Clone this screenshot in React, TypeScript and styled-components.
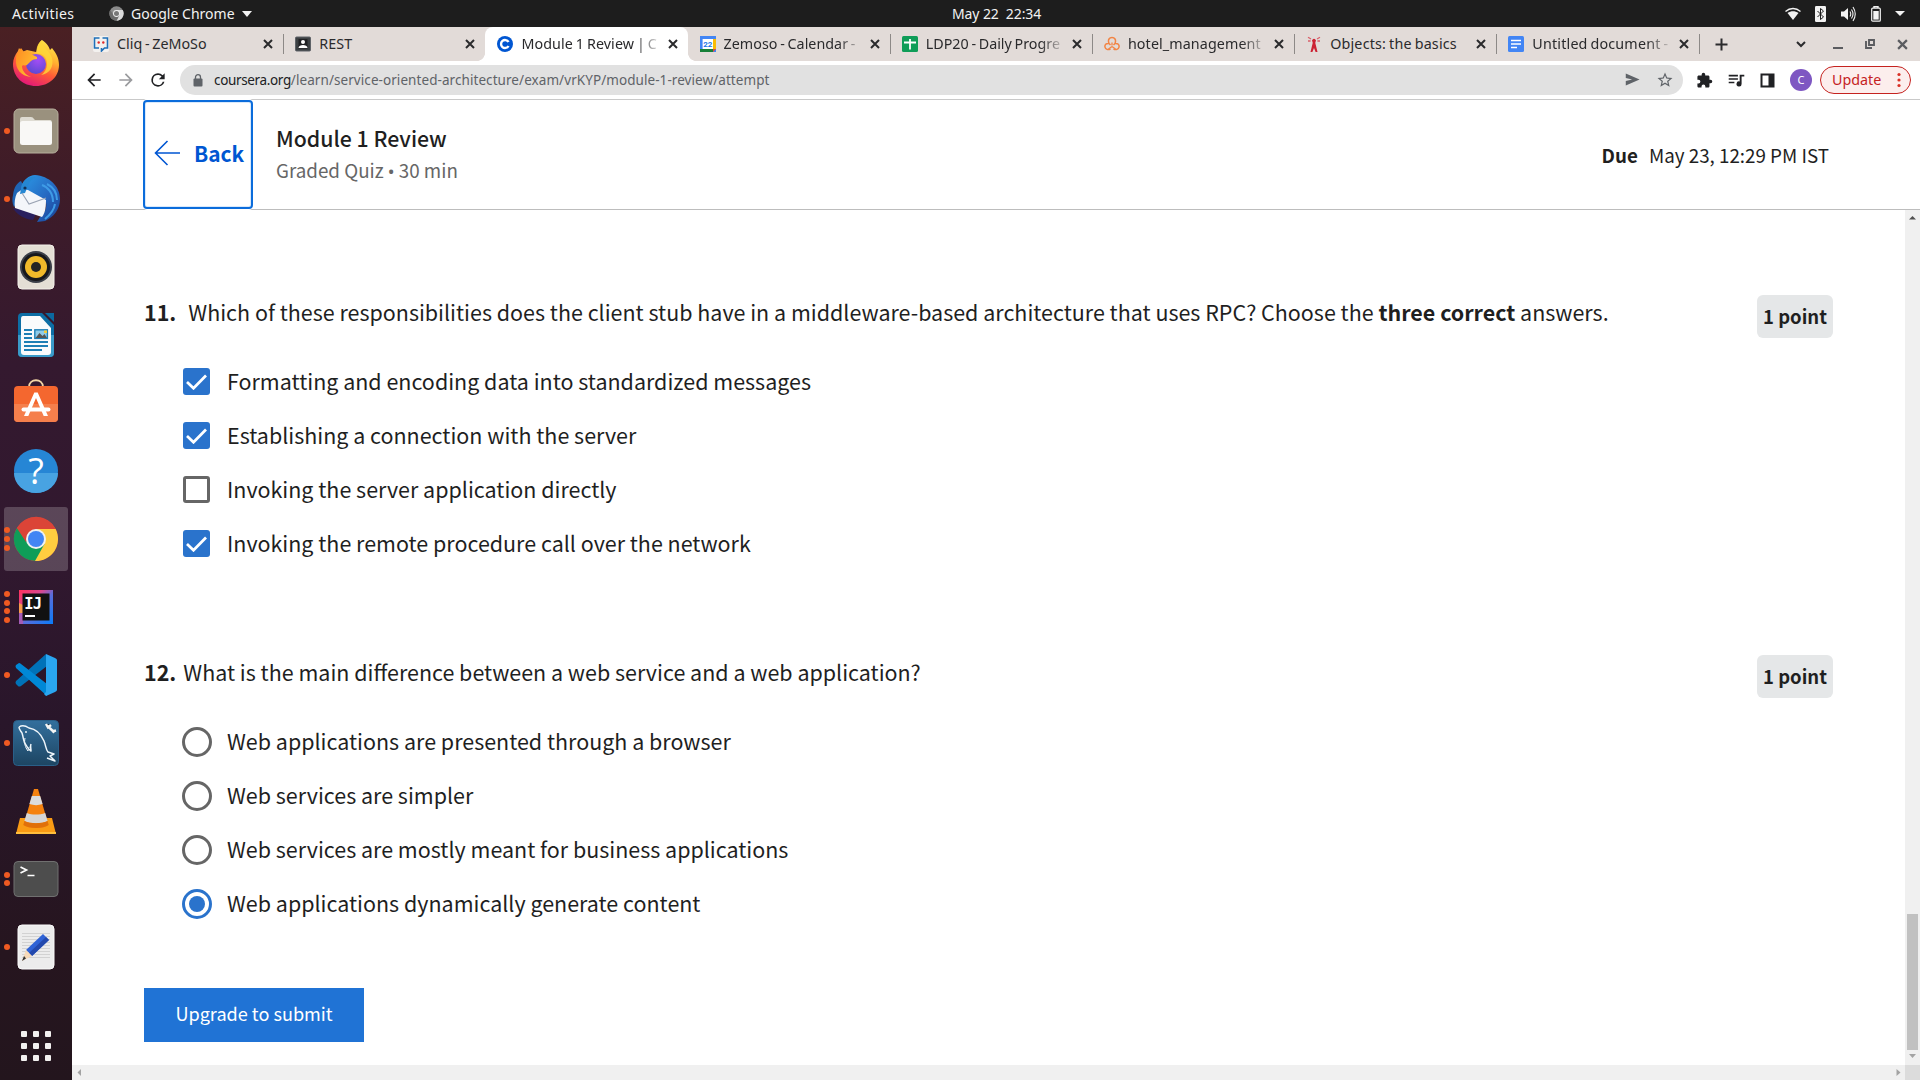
import React from "react";
import styled, { createGlobalStyle, css } from "styled-components";

const UI = `"Noto Sans", "Open Sans", sans-serif`;
const PAGE = `"Noto Sans CJK SC", "Noto Sans", sans-serif`;

const GlobalStyle = createGlobalStyle`
  *, *::before, *::after { box-sizing: border-box; }
  html, body { margin: 0; padding: 0; background: #fff; overflow: hidden; }
  svg { display: block; flex: none; }
  button { font: inherit; margin: 0; }
`;

const Desktop = styled.div`
  width: 1920px;
  height: 1080px;
  display: flex;
  flex-direction: column;
  overflow: hidden;
  font-family: ${UI};
`;

/* ---------- system bar ---------- */

const TopBar = styled.header`
  height: 27px;
  flex: none;
  display: flex;
  align-items: center;
  background: #1d1d1d;
  color: #f2f2f2;
  font-size: 14px;
  line-height: 27px;
  padding: 0 12px;
  white-space: pre;
`;
const Activities = styled.span`
  width: 97px;
  letter-spacing: 0.4px;
`;
const AppMenu = styled.div`
  width: 843px;
  display: flex;
  align-items: center;
  gap: 7px;
  letter-spacing: 0.02px;
`;
const Clock = styled.span`
  letter-spacing: -0.1px;
`;
const Tray = styled.div`
  margin-left: auto;
  display: flex;
  align-items: center;
  gap: 14px;
  margin-right: 3px;
`;

const Workspace = styled.div`
  flex: 1;
  display: flex;
  min-height: 0;
`;

/* ---------- dock ---------- */

const Dock = styled.nav`
  width: 72px;
  flex: none;
  display: flex;
  flex-direction: column;
  padding: 2px 0 10px;
  background: linear-gradient(#4a2023 0%, #3f1c28 14%, #34192f 32%, #31182f 50%, #29162a 66%, #26151f 88%, #23151d 100%);
`;
const DockItem = styled.div<{ $active?: boolean }>`
  height: 64px;
  margin: 2px 4px;
  display: grid;
  grid-template-columns: 6px 48px;
  column-gap: 2px;
  align-items: center;
  border-radius: 3px;
  background: ${(p) => (p.$active ? "rgba(255,255,255,0.2)" : "transparent")};
`;
const Dots = styled.div`
  display: flex;
  flex-direction: column;
  gap: 2.7px;
`;
const Dot = styled.i`
  width: 6px;
  height: 6px;
  border-radius: 50%;
  background: #f05a22;
`;
const AppGrid = styled.div`
  margin: auto auto 0;
  height: 48px;
  display: grid;
  grid-template-columns: repeat(3, 6px);
  gap: 6px;
  align-content: center;
`;
const GridCell = styled.i`
  height: 6px;
  border-radius: 1px;
  background: #f2f0ef;
`;

/* ---------- browser chrome ---------- */

const Browser = styled.main`
  flex: 1;
  min-width: 0;
  display: flex;
  flex-direction: column;
`;
const TabStrip = styled.div`
  height: 34px;
  flex: none;
  display: flex;
  padding-left: 9px;
  background: #e2dbd8;
`;
const Tab = styled.div<{ $active?: boolean; $divider?: boolean }>`
  width: 202.2px;
  height: 34px;
  position: relative;
  display: flex;
  align-items: center;
  padding: 0 10px 0 12px;
  font-size: 14.3px;
  line-height: 34px;
  color: #2a2a2c;
  ${(p) =>
    p.$divider &&
    css`
      &::after {
        content: "";
        position: absolute;
        right: -1px;
        top: 7px;
        width: 1px;
        height: 20px;
        background: #8d8987;
      }
    `}
  ${(p) =>
    p.$active &&
    css`
      background: #fff;
      border-radius: 8px 8px 0 0;
      &::before,
      &::after {
        content: "";
        position: absolute;
        bottom: 0;
        width: 8px;
        height: 8px;
      }
      &::before {
        left: -8px;
        background: radial-gradient(circle at 0 0, transparent 7.6px, #fff 8.2px);
      }
      &::after {
        right: -8px;
        background: radial-gradient(circle at 100% 0, transparent 7.6px, #fff 8.2px);
      }
    `}
`;
const TabTitle = styled.span<{ $track: number; $fade: boolean }>`
  flex: 1;
  margin: 0 7px 0 8px;
  white-space: nowrap;
  word-spacing: -1px;
  letter-spacing: ${(p) => p.$track}px;
  ${(p) => p.$fade && "mask-image: linear-gradient(90deg, #000 82%, transparent 101%);"}
`;
const StripControls = styled.div`
  flex: 1;
  display: flex;
  align-items: center;
  color: #2b2b2d;
`;
const NewTab = styled.span`
  margin: 0 auto 0 16px;
`;
const WindowButtons = styled.div`
  display: flex;
  align-items: center;
  gap: 22px;
  margin-right: 12px;
  color: #5b5c60;
`;
const TabSearch = styled.span`
  margin-right: 5px;
`;

const Toolbar = styled.div`
  height: 39px;
  flex: none;
  display: flex;
  align-items: center;
  padding: 0 9px 0 12px;
  border-bottom: 1px solid #c9c9c9;
  color: #202124;
`;
const NavButtons = styled.div`
  display: flex;
  gap: 12px;
  width: 96px;
`;
const Omnibox = styled.div`
  width: 1503px;
  height: 30px;
  display: flex;
  align-items: center;
  padding: 0 9px 0 13px;
  border-radius: 15px;
  background: #e1e1e1;
  color: #5f6368;
  font-size: 13.5px;
  line-height: 30px;
`;
const Url = styled.span`
  margin-left: 11px;
  margin-right: auto;
  letter-spacing: 0.07px;
`;
const Host = styled.span`
  color: #202124;
  letter-spacing: -0.35px;
`;
const OmniActions = styled.div`
  display: flex;
  gap: 15px;
`;
const Extensions = styled.div`
  margin-left: auto;
  display: flex;
  align-items: center;
  gap: 15px;
`;
const Avatar = styled.span`
  width: 22px;
  height: 22px;
  border-radius: 50%;
  background: #7e57c2;
  color: #fff;
  font: 11px/22px ${UI};
  text-align: center;
`;
const UpdateButton = styled.span`
  width: 91px;
  height: 28px;
  margin-left: 8px;
  display: flex;
  align-items: center;
  justify-content: space-between;
  padding: 0 9px 0 11px;
  border: 1px solid #c5221f;
  border-radius: 14px;
  background: #fceeed;
  color: #c5221f;
  font-size: 14.3px;
  line-height: 26px;
`;

/* ---------- quiz page ---------- */

const QuizHeader = styled.div`
  height: 110px;
  flex: none;
  display: flex;
  padding: 0 91px 0 71px;
  border-bottom: 1px solid #bdbdbd;
  font-family: ${PAGE};
  color: #1f1f1f;
`;
const BackButton = styled.a`
  position: relative;
  width: 110px;
  height: 109px;
  display: flex;
  align-items: center;
  gap: 14px;
  padding: 0 0 3px 9px;
  border: 2px solid #0b6cdb;
  border-radius: 4px;
  box-shadow: 0 0 0 1px #fff, inset 0 0 0 1px #d9e9fb;
  color: #0056d2;
  font-weight: 700;
  font-size: 20.9px;
  line-height: 30px;
`;
const HeaderText = styled.div`
  margin-left: 23px;
  padding-top: 22px;
`;
const Title = styled.h1`
  margin: 0;
  font-size: 21.3px;
  font-weight: 500;
  line-height: 32px;
`;
const Subtitle = styled.div`
  margin-top: 0;
  font-size: 18.8px;
  line-height: 32px;
  color: #666;
`;
const Bullet = styled.span`
  font-family: "Noto Sans", sans-serif;
  font-size: 18px;
`;
const Due = styled.div`
  margin: 40px 0 0 auto;
  display: flex;
  gap: 11px;
  font-size: 18.8px;
  line-height: 30px;
`;
const Strong = styled.b`
  font-weight: 700;
`;

const Viewport = styled.div`
  flex: 1;
  min-height: 0;
  display: grid;
  grid-template-columns: 1fr 15px;
  grid-template-rows: 1fr 15px;
`;
const QuizBody = styled.section`
  padding: 85px 72px 0;
  font-family: ${PAGE};
  color: #1f1f1f;
  font-size: 21.48px;
`;
const Question = styled.article`
  margin-bottom: 84px;
  &:last-of-type {
    margin-bottom: 57px;
  }
`;
const QuestionHead = styled.div`
  height: 60px;
  display: flex;
  align-items: flex-start;
  line-height: 34px;
`;
const Num = styled.b<{ $gap: number }>`
  margin-right: ${(p) => p.$gap}px;
`;
const Points = styled.span`
  margin-left: auto;
  width: 76px;
  height: 43px;
  border-radius: 6px;
  background: #e5e7e8;
  font-weight: 700;
  font-size: 18.5px;
  line-height: 43px;
  text-align: center;
`;
const Option = styled.label`
  height: 54px;
  display: flex;
  align-items: center;
  padding-left: 37px;
`;
const OptionText = styled.span`
  line-height: 51px;
  padding-bottom: 3px;
`;
const Control = styled.span`
  width: 31px;
  height: 30px;
  margin-right: 15px;
  display: grid;
  place-items: center;
`;
const Box = styled.span<{ $on: boolean }>`
  width: 27px;
  height: 27px;
  display: grid;
  place-items: center;
  border-radius: 3px;
  border: ${(p) => (p.$on ? "0" : "3px solid #666")};
  background: ${(p) => (p.$on ? "#2a73cc" : "#fff")};
  margin-top: -1px;
`;
const Radio = styled.span<{ $on: boolean }>`
  width: 30px;
  height: 30px;
  display: grid;
  place-items: center;
  border-radius: 50%;
  border: 3px solid ${(p) => (p.$on ? "#2a73cc" : "#666")};
  &::after {
    content: "";
    width: 16px;
    height: 16px;
    border-radius: 50%;
    background: ${(p) => (p.$on ? "#2a73cc" : "transparent")};
  }
`;
const Submit = styled.button`
  width: 220px;
  height: 54px;
  padding: 0 0 3px;
  border: 0;
  background: #2073d5;
  color: #fff;
  font-size: 18.1px;
  line-height: 51px;
  font-family: ${PAGE};
`;

const VBar = styled.div`
  display: flex;
  flex-direction: column;
  align-items: center;
  padding: 4px 0 6px;
  background: #f0f0f0;
`;
const Thumb = styled.div`
  width: 11px;
  height: 136px;
  margin: auto 0 2px;
  background: #c1c1c1;
`;
const HBar = styled.div`
  display: flex;
  align-items: center;
  justify-content: space-between;
  padding: 0 3px 0 4px;
  background: #f0f0f0;
`;
const Corner = styled.div`
  background: #dcdcdc;
`;

/* ---------- dock icons ---------- */

const I = ({ children }: { children: React.ReactNode }) => (
  <svg width="48" height="48" viewBox="0 0 48 48">{children}</svg>
);

const Firefox = () => (
  <I>
    <defs>
      <linearGradient id="ff1" x1=".75" y1="0" x2=".3" y2="1">
        <stop offset="0" stopColor="#ffe94a" /><stop offset=".35" stopColor="#ffb030" />
        <stop offset=".62" stopColor="#ff5b36" /><stop offset="1" stopColor="#e2147c" />
      </linearGradient>
      <radialGradient id="ff2" cx=".6" cy=".3" r=".8"><stop offset="0" stopColor="#a44df5" /><stop offset="1" stopColor="#5548cf" /></radialGradient>
      <linearGradient id="ff3" x1="0" y1="0" x2="1" y2=".6"><stop offset="0" stopColor="#ff8a22" /><stop offset="1" stopColor="#ffc130" /></linearGradient>
    </defs>
    <path d="M30 1c5 3 7 7 8 10l2-2c4 5 7 10 7 17 0 12-10 21-23 21S1 38 1 25c0-5 2-9 5-13l1-3 3 4 5-2 9 2 1-3c1-4 2-7 5-9Z" fill="url(#ff1)" />
    <circle cx="24" cy="25" r="10" fill="url(#ff2)" />
    <path d="M9 9l3 4c3-1 5 0 7 2l6 3 0 2c-5 0-7 3-9 5-3 3-5 0-6 2 0 4 3 9 9 11C9 37 3 30 4 20c0-5 3-8 5-11Z" fill="url(#ff3)" />
    <path d="M22 15c8-2 13 3 13 10 0 5-3 9-6 11 9-1 13-9 11-17-3-9-10-10-10-18-5 4-6 9-5 12l-3 2Z" fill="#ffd83a" opacity=".8" />
  </I>
);
const Files = () => (
  <I>
    <rect x="2" y="2" width="44" height="44" rx="5" fill="#9a917e" stroke="#b7af9d" />
    <path d="M8 12q0-2 2-2h9q2 0 3 2l1 1h15q2 0 2 3v18H8z" fill="#dedbd2" />
    <rect x="8" y="14" width="32" height="24" rx="2.5" fill="#f9f8f6" />
  </I>
);
const Thunderbird = () => (
  <I>
    <defs><linearGradient id="tb" x1="0" y1="0" x2="1" y2="1"><stop offset="0" stopColor="#2b9be8" /><stop offset=".6" stopColor="#2563bd" /><stop offset="1" stopColor="#17408f" /></linearGradient></defs>
    <path d="M1 33c4 7 11 11 20 12l4-8z" fill="#29205f" />
    <path d="M9 13C11 5 17 0 23 0c14 1 25 11 25 24 0 10-6 18-15 22l-8 1 3-5c5-4 7-9 6-15L9 13Z" fill="url(#tb)" />
    <path d="M1 20C2 12 5 8 9 6l6 12-13 14C0 28 0 24 1 20Z" fill="#1f65b5" />
    <path d="M5 18c3-3 6-4 11-3l18 10c0 8-1 13-4 17L3 33C2 28 3 22 5 18Z" fill="#f4f6fa" />
    <path d="M9 14c0-8 8-13 15-12-4 2-7 5-8 9l-3 7-5 1Z" fill="#2587d3" />
    <path d="M10 18l7 11 17-6" fill="none" stroke="#9aa3b3" strokeWidth="1.1" />
    <path d="M30 10c6 2 11 8 11 17m-6-18c6 3 10 9 10 16M33 44c5-4 9-9 10-15" stroke="#3e9be6" strokeWidth="2" fill="none" />
    <circle cx="13" cy="13" r="1.6" fill="#132f55" />
  </I>
);
const Rhythmbox = () => (
  <I>
    <rect x="6" y="2" width="36" height="44" rx="4" fill="#e4dfd5" stroke="#f4f1eb" />
    <circle cx="24" cy="24" r="16" fill="#3b3f48" /><circle cx="24" cy="24" r="14" fill="#17181c" />
    <circle cx="24" cy="24" r="11" fill="#f0b92a" /><circle cx="24" cy="24" r="5" fill="#242424" />
  </I>
);
const Writer = () => (
  <I>
    <path d="M10 2h20l12 12v28q0 4-4 4H10q-4 0-4-4V6q0-4 4-4z" fill="#0d6ea5" />
    <path d="M6 24h36v18q0 4-4 4H10q-4 0-4-4z" fill="#3a9bc9" />
    <path d="M33 2h9v9z" fill="#0c69a0" />
    <path d="M11 5h17l11 12v24q0 3-3 3H12q-3 0-3-3V8q0-3 2-3z" fill="#fafbfc" />
    <path d="M12 19h8M12 23h8M12 27h8M12 31h24M12 35h24M12 39h18" stroke="#1e7fb5" strokeWidth="2" />
    <rect x="22.8" y="18.8" width="12.6" height="8.6" fill="#8fcbe8" stroke="#1e7fb5" strokeWidth="1.4" />
    <path d="M23.5 27l4-5 3 3 2-2 2.5 4z" fill="#555" /><rect x="32" y="19.5" width="3" height="2.5" fill="#f3cb3b" />
  </I>
);
const Software = () => (
  <I>
    <path d="M17 8c0-9 14-9 14 0" fill="none" stroke="#f3d6a6" strokeWidth="1.8" />
    <rect x="2" y="7" width="44" height="36" rx="4" fill="#f4672f" />
    <path d="M2 25h44v14q0 4-4 4H6q-4 0-4-4z" fill="#f57f4c" />
    <path d="M22.300 13.500h3.400L36 37h-4.300L24 19l-7.700 18H12z" fill="#fff" />
    <path d="M11.500 30.500h25" stroke="#fff" strokeWidth="4" strokeLinecap="round" />
  </I>
);
const Help = () => (
  <I>
    <circle cx="24" cy="24" r="22" fill="#2686d5" />
    <path d="M2 26h44a22 20 0 0 1-44 0z" fill="#48a3e2" />
    <text x="24" y="37" textAnchor="middle" fontFamily="Open Sans" fontSize="36" fill="#fff">?</text>
  </I>
);
const Chrome = () => (
  <I>
    <circle cx="24" cy="24" r="22" fill="#db4437" />
    <path d="M24 24L4.9 13A22 22 0 0 0 24 46l9.500-16.500z" fill="#0f9d58" />
    <path d="M24 14h19.600A22 22 0 0 1 23 46l9.500-17z" fill="#ffcd40" />
    <path d="M4.900 13A22 22 0 0 1 43.700 14H24L14 27z" fill="#db4437" />
    <circle cx="24" cy="24" r="10" fill="#f1f1f1" /><circle cx="24" cy="24" r="8" fill="#4285f4" />
  </I>
);
const IntelliJ = () => (
  <I>
    <defs><linearGradient id="ij" x1="0" y1="0" x2="1" y2="1"><stop offset="0" stopColor="#fe315d" /><stop offset=".35" stopColor="#d8488f" /><stop offset=".55" stopColor="#5a6ddb" /><stop offset="1" stopColor="#087cfa" /></linearGradient></defs>
    <rect x="7" y="7" width="34" height="34" fill="url(#ij)" />
    <path d="M7 20l4 2v12l-4 7z" fill="#f79a4b" /><path d="M7 30h4v11H7z" fill="#a45bb5" />
    <rect x="10.500" y="10.500" width="27" height="27" fill="#111" />
    <text x="12.300" y="25.800" fontFamily="DejaVu Sans Mono" fontWeight="700" fontSize="15.500" letterSpacing="-1" fill="#fff">IJ</text>
    <path d="M13 33h10" stroke="#fff" strokeWidth="2" />
  </I>
);
const VSCode = () => (
  <I>
    <path d="M34 3L4 30q-1 2 0 3l2 2q1 1 3 0l26-20z" fill="#0072b8" />
    <path d="M4 14l3-2q1 0 2 1l26 20v12L4 17q-1-2 0-3z" fill="#0088d6" />
    <path d="M34 3l9 4q2 1 2 2v30q0 1-2 2l-9 4-2-2 2-2z" fill="#2aa6f0" />
  </I>
);
const Workbench = () => (
  <I>
    <defs><linearGradient id="wb" x2="0" y2="1"><stop offset="0" stopColor="#336f9d" /><stop offset="1" stopColor="#1d4562" /></linearGradient></defs>
    <rect x="1.500" y="1.500" width="45" height="45" rx="4" fill="url(#wb)" stroke="#2a5f88" />
    <path d="M7 8c3-2 7-1 10 1 7 1 12 6 15 13 2 5 2 9 4 11l6 2-4 2 5 5-8-3M7 8c0 3 2 4 3 6 2 6 1 9 4 12 2 4 4 5 5 6 0-3-1-5 0-7" fill="none" stroke="#eef5fa" strokeWidth="1.500" strokeLinejoin="round" />
    <path d="M13 19c-1 5 0 9 3 13 0-3 1-4 3-5" fill="none" stroke="#eef5fa" strokeWidth="1" />
    <path d="M35.500 7l7 6.500m-8.500-8.500l2 3.500 3-2.500m1 6.500l4-1" stroke="#f4f4f4" strokeWidth="2.400" /><circle cx="14" cy="13" r=".9" fill="#fff" />
  </I>
);
const Vlc = () => (
  <I>
    <path d="M8 31h32l4 16H4z" fill="#f99b14" /><path d="M4 45h40v2H4z" fill="#ffbe3c" />
    <path d="M22 2h4l10.500 36c-5 4-20 4-25 0z" fill="#f5820f" />
    <path d="M19.800 9h8.400l2.400 8c-4 1.500-9 1.500-13.200 0z" fill="#dcdcdc" />
    <path d="M14.800 26c5 2 13 2 18.400 0l2.400 8c-6 3-17 3-23.200 0z" fill="#d6d6d6" />
    <path d="M12.400 34c6 3 17 3 23.200 0l1 4c-5 4-20 4-25.200 0z" fill="#e0700a" />
  </I>
);
const Terminal = () => (
  <I>
    <rect x="2" y="6.500" width="44" height="35" rx="4" fill="#4d4d4d" stroke="#707070" />
    <path d="M8.500 12l6 3-6 3M15.500 20.500h7" fill="none" stroke="#fff" strokeWidth="1.700" />
  </I>
);
const Editor = () => (
  <I>
    <rect x="6" y="2" width="36" height="44" rx="4" fill="#ececec" stroke="#fafafa" />
    <path d="M10 10.500h28M10 13.500h28M10 16.500h28M10 19.500h28M10 22.500h28M10 25.500h28M10 28.500h28M10 31.500h28M10 34.500h28" stroke="#d2d2d2" />
    <path d="M31 11l6 6-17 16-6-6z" fill="#2f63d6" /><path d="M34 14l3 3-17 16-3-3z" fill="#2349ad" />
    <path d="M14 27l6 6-10 5z" fill="#f6d9b8" /><path d="M12 33l2 2.600L10 38z" fill="#333" />
  </I>
);

/* ---------- favicons ---------- */

const Fav = ({ children }: { children: React.ReactNode }) => (
  <svg width="16" height="16" viewBox="0 0 16 16">{children}</svg>
);
const favs: Record<string, React.ReactNode> = {
  cliq: (<Fav><rect width="16" height="16" rx="2" fill="#fff" opacity=".6" /><path d="M6.500 2H1.500v10H6M9.500 2h5v10h-3l-3 3v-3" fill="none" stroke="#1f6fb8" strokeWidth="1.600" /><circle cx="5.700" cy="6.500" r="1.200" fill="#e02b2b" /><circle cx="10.300" cy="6.500" r="1.200" fill="#e02b2b" /></Fav>),
  rest: (<Fav><rect x=".5" y="1" width="15" height="14" rx="1" fill="#3c4043" stroke="#5f6368" /><rect x="3.500" y="3" width="9" height="9.500" fill="#202124" /><circle cx="8" cy="6" r="2" fill="#fff" /><path d="M3.500 12c0-4 9-4 9 0z" fill="#fff" /></Fav>),
  coursera: (<Fav><circle cx="8" cy="8" r="8" fill="#0056d2" /><path d="M11.500 6A4 4 0 1 0 11.500 10" fill="none" stroke="#fff" strokeWidth="2.400" /></Fav>),
  calendar: (<Fav><path d="M0 0h16v16H0z" fill="#4285f4" /><path d="M13 3h3v10h-3z" fill="#fbbc04" /><path d="M0 13h13v3H0z" fill="#188038" /><path d="M13 13h3l-3 3z" fill="#ea4335" /><path d="M2.600 3H13v10H2.600z" fill="#fff" /><text x="7.800" y="10.900" textAnchor="middle" fontFamily="Roboto" fontWeight="700" fontSize="8" fill="#1a73e8">22</text></Fav>),
  sheets: (<Fav><rect width="16" height="16" rx="1.500" fill="#0f9d58" /><path d="M2 6.500h12M8 3v10.500" stroke="#fff" strokeWidth="1.800" /></Fav>),
  hotel: (<Fav><path d="M8 6.500v3m0 1L4.500 13m3.500-2.500L11.500 13" stroke="#f28444" strokeWidth="1.300" /><path d="M5 7.500C3.500 3.500 5.500 1.500 8 1.500s4.500 2 3 6c3-.500 4.500 1.500 4 3.700s-3 3-5.500 1.800M5 7.500c-3-.500-4.500 1.500-4 3.700s3 3 5.500 1.800M5 7.500l1.500 1.500M11 7.500L9.500 9" fill="none" stroke="#f28444" strokeWidth="1.500" /></Fav>),
  tower: (<Fav><path d="M6.300 4h3.400l-.4 3 2.200 9H9.600L8 12l-1.600 4H4.500l2.200-9z" fill="#cc2233" /><circle cx="8" cy="4.500" r="1.700" fill="#cc2233" /><path d="M5 3L2 1.200M4.600 5H2M11 3l3-1.800M11.400 5H14" stroke="#d9606a" strokeWidth="1.300" /></Fav>),
  docs: (<Fav><rect width="16" height="16" rx="1.500" fill="#4285f4" /><path d="M3 4.500h10M3 8h10M3 11.500h6" stroke="#fff" strokeWidth="1.700" /></Fav>),
};

const Cross = ({ s = 9, w = 1.7 }: { s?: number; w?: number }) => (
  <svg width={s} height={s} viewBox="0 0 10 10"><path d="M1 1l8 8M9 1L1 9" stroke="currentColor" strokeWidth={w} /></svg>
);
const Mat = ({ d, size = 18, color = "currentColor" }: { d: string; size?: number; color?: string }) => (
  <svg width={size} height={size} viewBox="0 0 24 24"><path d={d} fill={color} /></svg>
);
const Tri = ({ d, fill }: { d: string; fill: string }) => (
  <svg width="7" height="7" viewBox="0 0 7 7"><path d={d} fill={fill} /></svg>
);

const tabs = [
  { icon: "cliq", title: "Cliq - ZeMoSo", track: 0, divider: true },
  { icon: "rest", title: "REST", track: 0.15 },
  { icon: "coursera", title: "Module 1 Review | C", track: 0.1, active: true, fade: true },
  { icon: "calendar", title: "Zemoso - Calendar -", track: 0.02, divider: true, fade: true },
  { icon: "sheets", title: "LDP20 - Daily Progre", track: 0, divider: true, fade: true },
  { icon: "hotel", title: "hotel_management", track: 0.1, divider: true, fade: true },
  { icon: "tower", title: "Objects: the basics", track: 0.2, divider: true },
  { icon: "docs", title: "Untitled document -", track: 0.18, divider: true, fade: true },
];

const dock = [
  { icon: <Firefox />, dots: 0 },
  { icon: <Files />, dots: 1 },
  { icon: <Thunderbird />, dots: 1 },
  { icon: <Rhythmbox />, dots: 0 },
  { icon: <Writer />, dots: 0 },
  { icon: <Software />, dots: 0 },
  { icon: <Help />, dots: 0 },
  { icon: <Chrome />, dots: 3, active: true },
  { icon: <IntelliJ />, dots: 4 },
  { icon: <VSCode />, dots: 1 },
  { icon: <Workbench />, dots: 1 },
  { icon: <Vlc />, dots: 0 },
  { icon: <Terminal />, dots: 2 },
  { icon: <Editor />, dots: 1 },
];

const questions = [
  {
    num: "11.", gap: 12, kind: "check",
    prompt: (<>Which of these responsibilities does the client stub have in a middleware-based architecture that uses RPC? Choose the <Strong>three correct</Strong> answers.</>),
    options: [
      ["Formatting and encoding data into standardized messages", true],
      ["Establishing a connection with the server", true],
      ["Invoking the server application directly", false],
      ["Invoking the remote procedure call over the network", true],
    ] as [string, boolean][],
  },
  {
    num: "12.", gap: 7, kind: "radio",
    prompt: <>What is the main difference between a web service and a web application?</>,
    options: [
      ["Web applications are presented through a browser", false],
      ["Web services are simpler", false],
      ["Web services are mostly meant for business applications", false],
      ["Web applications dynamically generate content", true],
    ] as [string, boolean][],
  },
];

export default function App() {
  return (
    <Desktop>
      <GlobalStyle />
      <TopBar>
        <Activities>Activities</Activities>
        <AppMenu>
          <svg width="15" height="15" viewBox="0 0 48 48"><circle cx="24" cy="24" r="23" fill="#8a8a8a" /><path d="M24 13h20a23 23 0 0 1-20 34l10-18z" fill="#d9d9d9" /><path d="M4 13a23 23 0 0 0 20 34l8-16-18-2z" fill="#6b6b6b" /><circle cx="24" cy="24" r="11" fill="#eee" /><circle cx="24" cy="24" r="8" fill="#777" /></svg>
          <span>Google Chrome</span>
          <svg width="10" height="6" viewBox="0 0 10 6"><path d="M0 0h10L5 6z" fill="#f2f2f2" /></svg>
        </AppMenu>
        <Clock>May 22  22:34</Clock>
        <Tray>
          <svg width="16" height="14" viewBox="0 0 16 14"><path d="M.5 4.500C5 .500 11 .500 15.500 4.500" fill="none" stroke="#f2f2f2" strokeWidth="1.400" /><path d="M2.500 6C6 3.500 10 3.500 13.500 6L8 13z" fill="#f2f2f2" /></svg>
          <svg width="11" height="16" viewBox="0 0 11 16"><rect width="11" height="16" rx="1.200" fill="#f2f2f2" /><path d="M2.500 5l6 6-3 2.500v-11l3 2.500-6 6" fill="none" stroke="#1d1d1d" /></svg>
          <svg width="17" height="16" viewBox="0 0 17 16"><path d="M1 5.500h3L8 2v12l-4-3.500H1z" fill="#f2f2f2" /><path d="M10 5.500q1.500 2.500 0 5M11.500 3.500q3 4.500 0 9M13 1q4.500 7 0 14" fill="none" stroke="#f2f2f2" strokeWidth="1.100" /></svg>
          <svg width="10" height="16" viewBox="0 0 10 16"><path d="M3 2V.800h4V2" fill="none" stroke="#f2f2f2" strokeWidth="1.400" /><rect x=".7" y="2.200" width="8.600" height="13" rx="1" fill="none" stroke="#f2f2f2" strokeWidth="1.200" /><rect x="2.300" y="5" width="5.400" height="8.600" fill="#f2f2f2" /></svg>
          <svg width="10" height="5" viewBox="0 0 10 5"><path d="M0 0h10L5 5z" fill="#f2f2f2" /></svg>
        </Tray>
      </TopBar>
      <Workspace>
        <Dock>
          {dock.map((d, i) => (
            <DockItem key={i} $active={d.active}>
              <Dots>{Array.from({ length: d.dots }, (_, k) => <Dot key={k} />)}</Dots>
              {d.icon}
            </DockItem>
          ))}
          <AppGrid>{Array.from({ length: 9 }, (_, k) => <GridCell key={k} />)}</AppGrid>
        </Dock>
        <Browser>
          <TabStrip>
            {tabs.map((t) => (
              <Tab key={t.icon} $active={t.active} $divider={t.divider}>
                {favs[t.icon]}
                <TabTitle $track={t.track} $fade={!!t.fade}>{t.title}</TabTitle>
                <Cross s={10} w={2} />
              </Tab>
            ))}
            <StripControls>
              <NewTab><svg width="13" height="13" viewBox="0 0 13 13"><path d="M6.500 .5v12M.5 6.500h12" stroke="currentColor" strokeWidth="2" /></svg></NewTab>
              <WindowButtons>
                <TabSearch><svg width="10" height="7" viewBox="0 0 10 7"><path d="M1 1l4 4 4-4" fill="none" stroke="#2b2b2d" strokeWidth="2" /></svg></TabSearch>
                <svg width="10" height="10" viewBox="0 0 10 10"><path d="M0 9h10" stroke="currentColor" strokeWidth="2" /></svg>
                <svg width="10" height="10" viewBox="0 0 10 10"><path d="M4 1h5v5H4zM1 2v7h6" fill="none" stroke="currentColor" strokeWidth="1.900" /></svg>
                <Cross s={11} w={2} />
              </WindowButtons>
            </StripControls>
          </TabStrip>
          <Toolbar>
            <NavButtons>
              <Mat d="M20 11H7.830l5.590-5.590L12 4l-8 8 8 8 1.410-1.410L7.830 13H20v-2z" size={20} />
              <Mat d="M12 4l-1.410 1.410L16.170 11H4v2h12.170l-5.580 5.590L12 20l8-8z" size={20} color="#9a9b9e" />
              <Mat d="M17.650 6.350A7.960 7.960 0 0 0 12 4a8 8 0 1 0 7.730 10h-2.080A6 6 0 1 1 12 6c1.660 0 3.140.690 4.220 1.780L13 11h7V4l-2.350 2.350z" size={20} />
            </NavButtons>
            <Omnibox>
              <svg width="10" height="13" viewBox="0 0 10 13"><rect x=".5" y="4.500" width="9" height="8" rx="1" fill="currentColor" /><path d="M2.500 5V3.200a2.500 2.500 0 0 1 5 0V5" fill="none" stroke="currentColor" strokeWidth="1.300" /></svg>
              <Url><Host>coursera.org</Host>/learn/service-oriented-architecture/exam/vrKYP/module-1-review/attempt</Url>
              <OmniActions>
                <Mat d="M2.500 3.500L22 12 2.500 20.500V14l9-2-9-2z" size={17} />
                <Mat d="M22 9.240l-7.190-.620L12 2 9.190 8.630 2 9.240l5.460 4.730L5.820 21 12 17.270 18.180 21l-1.630-7.030L22 9.240zM12 15.400l-3.760 2.270 1-4.280-3.320-2.880 4.380-.380L12 6.100l1.710 4.040 4.380.380-3.320 2.880 1 4.280L12 15.400z" size={18} />
              </OmniActions>
            </Omnibox>
            <Extensions>
              <Mat d="M20.500 11H19V7c0-1.100-.900-2-2-2h-4V3.500a2.500 2.500 0 0 0-5 0V5H4c-1.100 0-2 .900-2 2v3.800h1.500a2.700 2.700 0 0 1 0 5.400H2V20c0 1.100.900 2 2 2h3.800v-1.500a2.700 2.700 0 0 1 5.400 0V22H17c1.100 0 2-.900 2-2v-4h1.500a2.500 2.500 0 0 0 0-5z" size={17} />
              <Mat d="M1 4h13v2.300H1zM1 8.800h13v2.300H1zM1 13.600h8v2.300H1zM16.500 4H23v2.400h-3.800v10.400a3.600 3.600 0 1 1-2.700-3.500z" size={17} />
              <svg width="15" height="15" viewBox="0 0 15 15"><path d="M.5 .5h14v14H.5zM2.500 2.500v10h6v-10z" fill="currentColor" fillRule="evenodd" /></svg>
              <Avatar>C</Avatar>
            </Extensions>
            <UpdateButton>
              Update
              <svg width="4" height="16" viewBox="0 0 4 16"><circle cx="2" cy="2.500" r="1.600" fill="#d93025" /><circle cx="2" cy="8" r="1.600" fill="#d93025" /><circle cx="2" cy="13.500" r="1.600" fill="#d93025" /></svg>
            </UpdateButton>
          </Toolbar>

          <QuizHeader>
            <BackButton>
              <svg width="26" height="26" viewBox="0 0 26 26"><path d="M13.500 1L1.500 13l12 12M1.500 13H26" fill="none" stroke="currentColor" strokeWidth="1.600" /></svg>
              Back
            </BackButton>
            <HeaderText>
              <Title>Module 1 Review</Title>
              <Subtitle>Graded Quiz <Bullet>•</Bullet> 30 min</Subtitle>
            </HeaderText>
            <Due><Strong>Due</Strong><span>May 23, 12:29 PM IST</span></Due>
          </QuizHeader>

          <Viewport>
            <QuizBody>
              {questions.map((q) => (
                <Question key={q.num}>
                  <QuestionHead>
                    <Num $gap={q.gap}>{q.num}</Num>
                    <span>{q.prompt}</span>
                    <Points>1 point</Points>
                  </QuestionHead>
                  {q.options.map(([label, on]) => (
                    <Option key={label}>
                      <Control>
                        {q.kind === "radio" ? (
                          <Radio $on={on} />
                        ) : (
                          <Box $on={on}>
                            {on && <svg width="21" height="16" viewBox="0 0 21 16"><path d="M1 8l6.500 6.300L20 1.500" fill="none" stroke="#fff" strokeWidth="2.700" /></svg>}
                          </Box>
                        )}
                      </Control>
                      <OptionText>{label}</OptionText>
                    </Option>
                  ))}
                </Question>
              ))}
              <Submit>Upgrade to submit</Submit>
            </QuizBody>
            <VBar>
              <Tri d="M0 5.500L3.500 2 7 5.500z" fill="#505050" />
              <Thumb />
              <Tri d="M0 2h7L3.500 6z" fill="#a3a3a3" />
            </VBar>
            <HBar>
              <Tri d="M5 0v7L1.500 3.500z" fill="#a3a3a3" />
              <Tri d="M1.500 0v7L5.500 3.500z" fill="#a3a3a3" />
            </HBar>
            <Corner />
          </Viewport>
        </Browser>
      </Workspace>
    </Desktop>
  );
}
